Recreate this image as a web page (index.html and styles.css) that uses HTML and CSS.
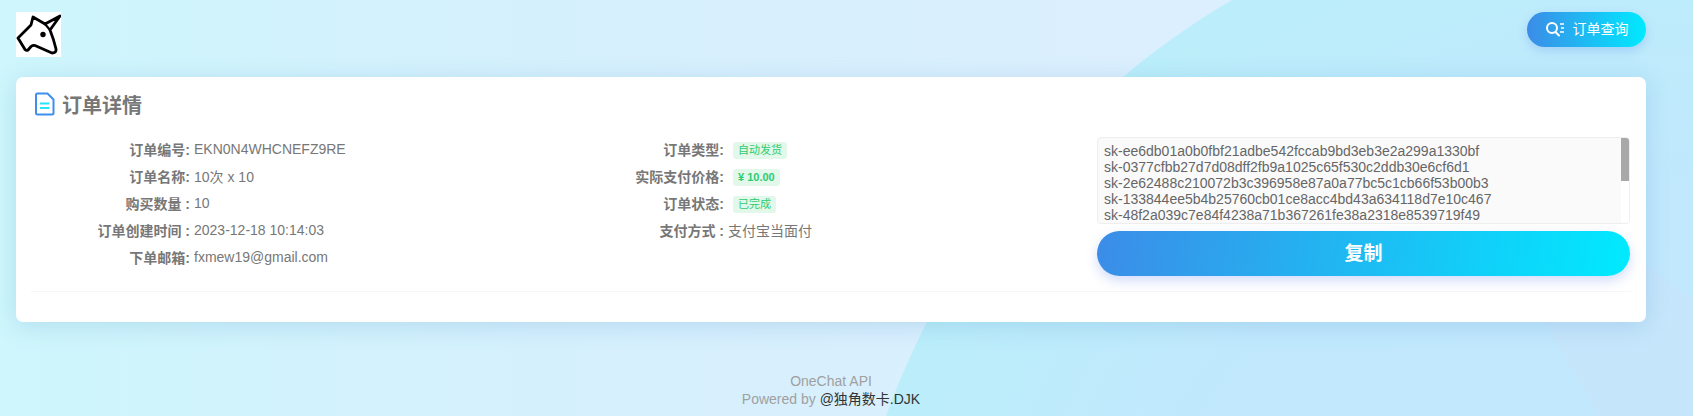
FILE: index.html
```html
<!DOCTYPE html>
<html lang="zh-CN">
  <head>
    <meta charset="UTF-8" />
    <meta name="viewport" content="width=device-width, initial-scale=1.0" />
    <title>订单详情</title>
    <link rel="stylesheet" href="styles.css">
  </head>
  <body>
    <!-- Top bar -->
    <header class="topbar">
      <div class="logo">
        <svg width="45" height="45" viewBox="0 0 45 45">
          <path d="M2 26 L15 13 L17 5 L29 12 L44 4 L34 18 Q38 28 40 37 Q40.500 41 36 41 L19 33.500 Q17 33 15 34.500 L12 38 Q10.500 39 9 37.500 Z" fill="#fff" stroke="#000" stroke-width="2.800" stroke-linejoin="round" />
          <path d="M29 12 L34 18" fill="none" stroke="#000" stroke-width="2.200" />
          <circle cx="27" cy="22.500" r="2.700" fill="#000" />
        </svg>
      </div>
      <a class="query-btn" href="#">
        <svg class="query-icon" width="20" height="16" viewBox="0 0 20 16">
          <circle cx="7" cy="7" r="5" fill="none" stroke="#fff" stroke-width="2" />
          <path d="M10.500 11 L14 14.500" stroke="#fff" stroke-width="2" stroke-linecap="round" />
          <path d="M15 3 H19 M16 7 H19 M15 11 H19" stroke="#fff" stroke-width="1.300" />
        </svg>
        <span>订单查询</span>
      </a>
    </header>

    <!-- Order card -->
    <main class="card">
      <h2 class="card-title">
        <svg width="20" height="24" viewBox="0 0 20 24">
          <path d="M2.500 1.500 H12.500 L18.500 7.500 V21 Q18.500 22.500 17 22.500 H2.500 Q1 22.500 1 21 V3 Q1 1.500 2.500 1.500 Z" fill="#fff" stroke="#3e8ef0" stroke-width="2" stroke-linejoin="round" />
          <path d="M5 11.500 H14.500 M5 16 H14.500" stroke="#25e5fb" stroke-width="2" />
        </svg>
        <span>订单详情</span>
      </h2>

      <div class="detail">
        <div class="col col-one">
          <div class="row"><label>订单编号:</label><span>EKN0N4WHCNEFZ9RE</span></div>
          <div class="row"><label>订单名称:</label><span>10次 x 10</span></div>
          <div class="row"><label>购买数量 :</label><span>10</span></div>
          <div class="row"><label>订单创建时间 :</label><span>2023-12-18 10:14:03</span></div>
          <div class="row"><label>下单邮箱:</label><span>fxmew19@gmail.com</span></div>
        </div>
        <div class="col col-two">
          <div class="row"><label>订单类型:</label><span class="tag">自动发货</span></div>
          <div class="row"><label>实际支付价格:</label><span class="tag tag-price">¥ 10.00</span></div>
          <div class="row"><label>订单状态:</label><span class="tag">已完成</span></div>
          <div class="row"><label>支付方式 :</label><span class="plain">支付宝当面付</span></div>
        </div>
        <div class="col col-three">
          <div class="keys">
            <div class="keys-text">sk-ee6db01a0b0fbf21adbe542fccab9bd3eb3e2a299a1330bf
sk-0377cfbb27d7d08dff2fb9a1025c65f530c2ddb30e6cf6d1
sk-2e62488c210072b3c396958e87a0a77bc5c1cb66f53b00b3
sk-133844ee5b4b25760cb01ce8acc4bd43a634118d7e10c467
sk-48f2a039c7e84f4238a71b367261fe38a2318e8539719f49</div>
            <div class="keys-bar"><div class="keys-thumb"></div></div>
          </div>
          <button class="copy-btn" type="button">复制</button>
        </div>
      </div>
      <div class="divider"></div>
    </main>

    <!-- Footer -->
    <footer class="footer">
      <div>OneChat API</div>
      <div>Powered by <a href="#">@独角数卡.DJK</a></div>
    </footer>
  </body>
</html>
```

FILE: styles.css
```css
* {
  box-sizing: border-box;
}
html,
body {
  height: 100%;
}
body {
  margin: 0;
  padding: 12px 47px 0 16px;
  overflow: hidden;
  font-family: "Liberation Sans", "Noto Sans CJK SC", sans-serif;
  font-size: 14px;
  color: #777;
  background-color: #d5f0fd;
  background-image:
    conic-gradient(from 126.500deg at 1411px 91px, rgba(200, 228, 250, 0.6) 0 23.500deg, transparent 23.500deg),
    radial-gradient(circle at 1635px 687px, #c3e8fd 0, #c1e8fd 500px, #bbeefa 796px, transparent 797px),
    linear-gradient(90deg, #cef6fc 0, #d5f0fd 32%, #dceffe 70%, #dceffe 100%);
}
.topbar {
  display: flex;
  justify-content: space-between;
  align-items: flex-start;
  height: 65px;
}
.logo {
  width: 45px;
  height: 45px;
  background: #fff;
}
.logo svg,
.query-btn svg,
.card-title svg {
  display: block;
}
.query-btn {
  display: flex;
  align-items: center;
  justify-content: center;
  gap: 8px;
  width: 119px;
  height: 35px;
  padding-bottom: 3px;
  border-radius: 18px;
  color: #fff;
  text-decoration: none;
  background: linear-gradient(90deg, #3c8ce7, #00eaff);
  box-shadow: 0 4px 10px rgba(80, 130, 240, 0.25);
}
.query-icon {
  margin-top: 2px;
}
.card {
  height: 245px;
  padding: 13px 15px 0 19px;
  background: #fff;
  border-radius: 7px;
  box-shadow: 0 4px 24px rgba(60, 130, 190, 0.2);
}
.card-title {
  display: flex;
  align-items: center;
  gap: 7px;
  margin: 0 0 17px;
  height: 28px;
  font-size: 20px;
  color: #777;
}
.detail {
  display: flex;
  height: 156px;
}
.col-one {
  width: 576px;
}
.col-two {
  width: 487px;
}
.col-three {
  width: 533px;
  margin-left: -1px;
  padding-top: 2px;
}
.row {
  display: flex;
  align-items: center;
  height: 27px;
}
.row label {
  flex-shrink: 0;
  font-weight: bold;
  text-align: right;
}
.col-one label {
  width: 155px;
  margin-right: 4px;
}
.col-two label {
  width: 113px;
  margin-right: 9px;
}
.tag {
  margin-top: 3px;
  padding: 0 5px;
  height: 17px;
  line-height: 17px;
  border-radius: 3px;
  font-size: 11px;
  color: #2ecc71;
  background: #e2f8ea;
}
.tag-price {
  font-weight: bold;
}
.plain {
  margin-left: -5px;
}
.keys {
  display: flex;
  height: 87px;
  border: 1px solid #eee;
  border-radius: 4px;
  background: #fafafa;
  overflow: hidden;
}
.keys-text {
  flex: 1;
  padding: 5px 6px 0;
  white-space: pre;
  line-height: 16px;
  color: #666;
  overflow: hidden;
}
.keys-bar {
  width: 8px;
  background: #fff;
}
.keys-thumb {
  height: 43px;
  background: #a8a8a8;
}
.copy-btn {
  display: block;
  width: 100%;
  height: 45px;
  margin-top: 7px;
  padding-bottom: 5px;
  border: none;
  border-radius: 23px;
  font-family: inherit;
  font-size: 19px;
  font-weight: bold;
  color: #fff;
  background: linear-gradient(100deg, #3c8ce7, #00eaff);
  box-shadow: 0 5px 12px rgba(80, 120, 240, 0.25);
}
.divider {
  height: 1px;
  margin-left: -4px;
  background: #f6f6f6;
}
.footer {
  margin-top: 50px;
  text-align: center;
  line-height: 18px;
  color: #a0a0a0;
}
.footer a {
  color: #333;
  text-decoration: none;
}
```
